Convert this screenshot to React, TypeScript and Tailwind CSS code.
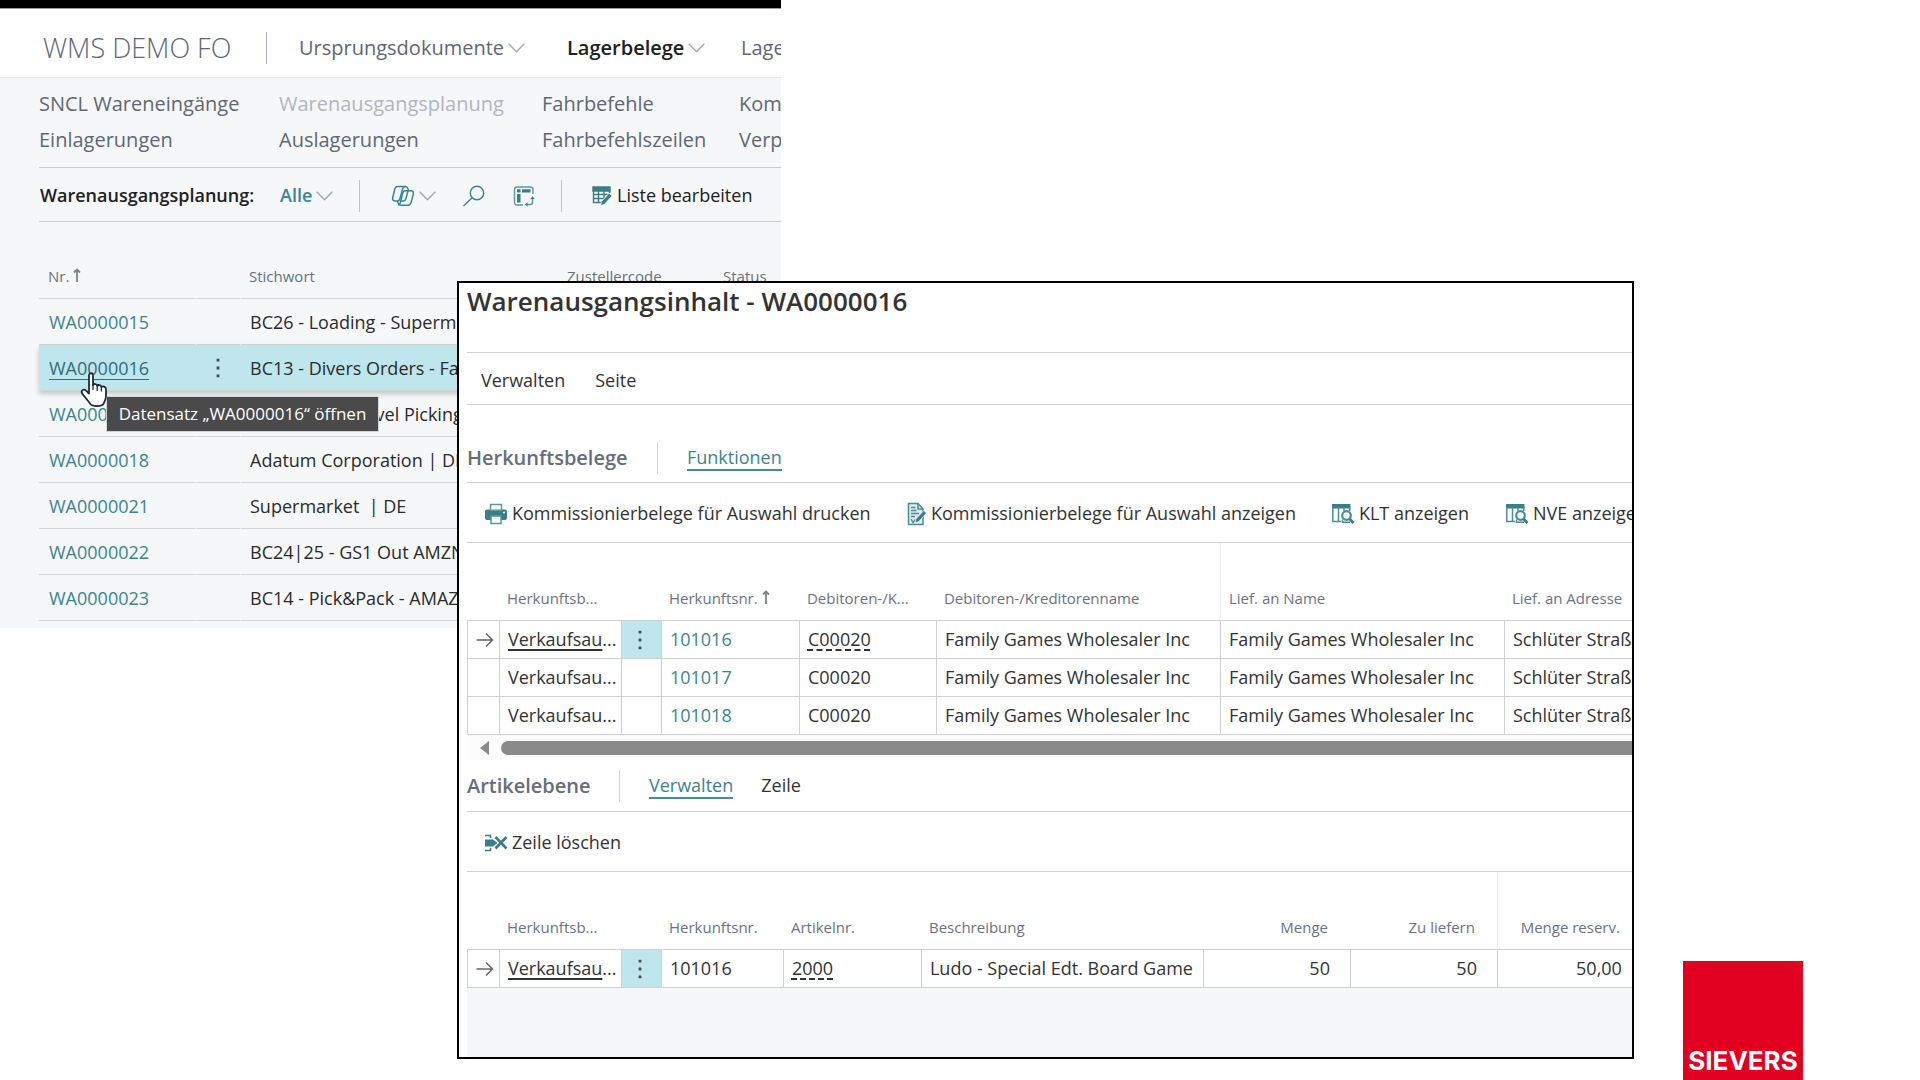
import type { ReactNode } from 'react';

const navLinks = [
  'SNCL Wareneingänge',
  'Warenausgangsplanung',
  'Fahrbefehle',
  'Kommissionierung',
  'Einlagerungen',
  'Auslagerungen',
  'Fahrbefehlszeilen',
  'Verpacken',
];

const plans = [
  { nr: 'WA0000015', keyword: 'BC26 - Loading - Supermarket' },
  { nr: 'WA0000016', keyword: 'BC13 - Divers Orders - Family Games' },
  { nr: 'WA0000017', keyword: 'BC12 - Multi Level Picking' },
  { nr: 'WA0000018', keyword: 'Adatum Corporation | DE' },
  { nr: 'WA0000021', keyword: 'Supermarket\u00a0 | DE' },
  { nr: 'WA0000022', keyword: 'BC24|25 - GS1 Out AMZN' },
  { nr: 'WA0000023', keyword: 'BC14 - Pick&Pack - AMAZON' },
];

const orders = ['101016', '101017', '101018'];

function Chevron() {
  return (
    <svg viewBox="0 0 17 10" className="h-2.5 w-[17px]" fill="none" stroke="#a3a7ae" strokeWidth="1.4" aria-hidden="true">
      <path d="M.7 .8l7.800 8 7.800-8" />
    </svg>
  );
}

function CopilotIcon() {
  return (
    <svg viewBox="0 0 24 22" className="h-[22px] w-6" fill="none" stroke="#3b8590" strokeWidth="1.5" strokeLinejoin="round" aria-hidden="true">
      <path d="M7 1.500h7.500c1.500 0 2 1 2.500 2.500l.6 1.800h2.200c2 0 3 1.500 2.500 3.300l-2 8c-.5 1.900-1.500 3.100-3.300 3.100H9.500c-1.500 0-2-1-2.500-2.500l-.5-1.700H4.200c-2 0-3-1.400-2.500-3.300l2-8.300C4.100 2.600 5.200 1.500 7 1.500z" />
      <path d="M14.500 1.500c-1.800 0-2.600 1-3 2.700L9 13.500c-.4 1.500-1.200 2.500-2.800 2.500" />
      <path d="M17.600 5.800h-3.400c-1.500 0-2.200 1-2.600 2.400l-2.300 9.500c-.4 1.500-1 2.300-2.300 2.300" />
      <path d="M9 16h3.500c1.300 0 2-.8 2.400-2.200l2.100-8" />
    </svg>
  );
}

function SearchIcon() {
  return (
    <svg viewBox="0 0 24 22" className="h-[22px] w-6" fill="none" stroke="#3b8590" strokeWidth="1.4" aria-hidden="true">
      <circle cx="15" cy="8" r="6.700" />
      <path d="M10.200 12.800L1.500 21" />
    </svg>
  );
}

function AnalyzeIcon() {
  return (
    <svg viewBox="0 0 22 22" className="h-[22px] w-[22px]" fill="none" stroke="#5b9aa3" strokeWidth="1.400" aria-hidden="true">
      <path d="M10 20H4a2.500 2.500 0 0 1-2.500-2.500v-13A2.500 2.500 0 0 1 4 2h13.500A2.500 2.500 0 0 1 20 4.500V9" />
      <path d="M4 4.200h3.500v3.300H4zM9 4.200h8.500v3.300H9zM4 9h3.500v8.500H4z" fill="#3b7e88" stroke="none" />
      <path d="M19.500 13v4.500a2 2 0 0 1-2 2H14" />
      <path d="M17.200 14l2.300-2.800 2.300 2.800zM14.500 17.200l-2.800 2.300 2.800 2.300z" fill="#3b7e88" stroke="none" />
    </svg>
  );
}

function EditListIcon() {
  return (
    <svg viewBox="0 0 21 20" className="h-5 w-[21px]" fill="none" stroke="#3b7e88" strokeWidth="1.400" aria-hidden="true">
      <path d="M1 1h17v4H1z" fill="#3b7e88" />
      <path d="M1.500 4v12.500H10M1.500 8.500H17M1.500 12.500H12M6.500 4v12.500M12 4v9M17.500 4v3" />
      <path d="M8.500 19.500l.9-4 7.800-8.300 2.900 2.800-7.800 8.500z" fill="#3b7e88" stroke="#f5f7f9" strokeWidth=".8" />
    </svg>
  );
}

function PrintIcon() {
  return (
    <svg viewBox="0 0 24 22" className="h-[22px] w-6" aria-hidden="true">
      <path d="M3 6.500h18a2 2 0 0 1 2 2V15a2 2 0 0 1-2 2H3a2 2 0 0 1-2-2V8.500a2 2 0 0 1 2-2z" fill="#3b7e88" />
      <path d="M6.500 1.500h11v5.800h-11zM7 13h10v7.500H7z" fill="#fff" stroke="#5b98a1" strokeWidth="1.500" />
      <circle cx="20" cy="9.500" r="1" fill="#fff" />
    </svg>
  );
}

function EditDocumentIcon() {
  return (
    <svg viewBox="0 0 20 24" className="h-6 w-5" fill="none" stroke="#4a8d97" strokeWidth="1.500" aria-hidden="true">
      <path d="M1.500 1.500H11L16 7v15.500H1.500z" fill="#dcebed" />
      <path d="M11 1.500V7h5" />
      <path d="M4 5.500h4.500M4 8.500h5.500M4 11.500h8M4 14.500h4M4 17l2 3.500 2.500-3" />
      <path d="M8 21l1-4.300 7.800-8.200 2.700 2.600-7.700 8.500z" fill="#3b7e88" stroke="#fff" strokeWidth=".7" />
    </svg>
  );
}

function TableSearchIcon() {
  return (
    <svg viewBox="0 0 24 21" className="h-[21px] w-6" fill="none" stroke="#4a8d97" strokeWidth="1.500" aria-hidden="true">
      <path d="M1 1h18.500v4.500H1z" fill="#3b7e88" stroke="none" />
      <path d="M1.800 4v14.500H10M7.500 4v14.500M13 4v4M18.800 4v4" />
      <circle cx="15.500" cy="12.500" r="4.300" strokeWidth="2.200" fill="#fff" />
      <path d="M11.500 16.500v2.800h7.500" />
      <path d="M18.500 15.800l4 4.200" stroke="#3b7e88" strokeWidth="2.800" />
    </svg>
  );
}

function DeleteLineIcon() {
  return (
    <svg viewBox="0 0 24 18" className="h-[18px] w-6" fill="none" stroke="#3b7e88" aria-hidden="true">
      <path d="M1 1.500h5.500V4M1 16.500h5.500V14" strokeWidth="1.600" />
      <path d="M1 5.500h8l4.500 3.500L9 12.500H1z" fill="#3b7e88" stroke="none" />
      <path d="M11.500 3L22.500 14.500M22.500 3L11.500 14.500" strokeWidth="2.600" />
    </svg>
  );
}

function SortArrow() {
  return (
    <svg viewBox="0 0 8 14" className="inline-block h-3.5 w-2 align-baseline" fill="none" stroke="#7d828c" strokeWidth="1.800" aria-hidden="true">
      <path d="M4 14V2M1 4.500L4 1.500l3 3" />
    </svg>
  );
}

function RowArrow() {
  return (
    <svg viewBox="0 0 18 16" className="mx-auto h-4 w-[18px]" fill="none" stroke="#666" strokeWidth="1.500" aria-hidden="true">
      <path d="M.5 8h16M10 1.500L16.500 8 10 14.500" />
    </svg>
  );
}

function Kebab() {
  return (
    <button type="button" aria-label="Weitere Optionen" className="flex w-full justify-center">
      <svg viewBox="0 0 4 20" className="h-5 w-1" fill="#4a4a4a" aria-hidden="true">
        <path d="M.6 .8h2.800v2.800H.6zM.6 8.600h2.800v2.800H.6zM.6 16.400h2.800v2.800H.6z" />
      </svg>
    </button>
  );
}

function HandCursor() {
  return (
    <svg viewBox="0 0 28 36" className="absolute left-[41px] top-[27px] z-20 h-9 w-7" fill="#fff" stroke="#222a3a" strokeWidth="1.800" strokeLinejoin="round" aria-hidden="true">
      <path d="M9 3.500C9 .5 13 .5 13 3.500V13c1-1.600 4-1.200 4.200.8 1.200-1.400 3.900-.8 4.200 1.200 1.400-1.200 4.600-.4 4.600 2.200V24c0 4-1.800 6-2.600 8-1.600 2.600-11 2.800-13 0C8.500 29 5 25.500 2.200 21.500c-1.800-3 1.400-5 3.800-2.800l3 2.800z" />
      <path d="M13 12v6M17.200 13.500V19M21.400 15v4.500" strokeWidth="1.300" />
    </svg>
  );
}

function ToolButton({ icon, children }: { icon: ReactNode; children: ReactNode }) {
  return (
    <button type="button" className="flex shrink-0 items-center gap-1 whitespace-nowrap">
      {icon}
      {children}
    </button>
  );
}

function Tab({ active, children }: { active?: boolean; children: ReactNode }) {
  return (
    <button
      type="button"
      className={active ? 'border-b-2 border-[#4a8d97] leading-6 text-[#3b8590]' : 'border-b-2 border-transparent leading-6'}
    >
      {children}
    </button>
  );
}

function PlanningPage() {
  return (
    <div className="w-[40.7%] overflow-hidden bg-[#f5f7f9] pb-[7px]">
      <div className="h-[9px] border-b border-gray-400 bg-black" />
      <header className="flex h-[69px] items-center border-b border-gray-200 bg-white pt-2.5 pl-[43px] text-[20px] whitespace-nowrap text-[#5f6775]">
        <h1 className="w-[223px] shrink-0 text-[27px] font-light">WMS DEMO FO</h1>
        <div className="h-8 w-px shrink-0 bg-[#a9abba]" />
        <button type="button" className="ml-8 flex w-[236px] shrink-0 items-center gap-1">
          Ursprungsdokumente <Chevron />
        </button>
        <button type="button" className="ml-8 flex w-[142px] shrink-0 items-center gap-1 font-semibold text-[#212121]">
          Lagerbelege <Chevron />
        </button>
        <button type="button" className="ml-8 shrink-0">Lagerplätze</button>
      </header>

      <div className="ml-[39px]">
        <nav className="grid grid-cols-[240px_263px_197px_auto] border-b border-[#c8cacd] pt-2 pb-[9px] text-[20px] leading-9 whitespace-nowrap text-[#5f6775]">
          {navLinks.map((link) => (
            <a key={link} href="#" className={link === 'Warenausgangsplanung' ? 'text-[#b1b5c0]' : ''}>
              {link}
            </a>
          ))}
        </nav>

        <div className="flex h-[54px] items-center border-b border-[#c8cacd] pt-0.5 pl-px text-[18px] whitespace-nowrap text-[#212121]">
          <h2 className="w-60 shrink-0 font-semibold">Warenausgangsplanung:</h2>
          <button type="button" className="flex w-[79px] shrink-0 items-center gap-1 font-semibold text-[#3b8590]">
            Alle <Chevron />
          </button>
          <div className="h-8 w-px shrink-0 bg-[#c0c2c6]" />
          <button type="button" aria-label="Copilot" className="ml-[31px] flex shrink-0 items-center gap-1">
            <CopilotIcon />
            <Chevron />
          </button>
          <button type="button" aria-label="Suchen" className="ml-[26px] shrink-0">
            <SearchIcon />
          </button>
          <button type="button" aria-label="Analysieren" className="ml-[27px] shrink-0">
            <AnalyzeIcon />
          </button>
          <div className="mr-[30px] ml-[26px] h-8 w-px shrink-0 bg-[#c0c2c6]" />
          <ToolButton icon={<EditListIcon />}>Liste bearbeiten</ToolButton>
        </div>

        <table className="w-full table-fixed border-separate border-spacing-0 text-[18px] text-[#2b2b2b]">
          <colgroup>
            <col className="w-[158px]" />
            <col className="w-11" />
            <col className="w-[318px]" />
            <col className="w-[156px]" />
            <col />
          </colgroup>
          <thead>
            <tr className="h-[77px] text-left align-bottom text-[15px] leading-5 whitespace-nowrap text-[#6b7080]">
              <th className="border-r-2 border-b border-r-transparent border-b-[#d3d5d8] pb-3 pl-[9px] font-normal">
                Nr. <SortArrow />
              </th>
              <th className="border-r-2 border-b border-r-transparent border-b-[#d3d5d8]" />
              <th className="border-b border-[#d3d5d8] pb-3 pl-2 font-normal">Stichwort</th>
              <th className="border-b border-[#d3d5d8] pb-3 pl-2 font-normal">Zustellercode</th>
              <th className="border-b border-[#d3d5d8] pb-3 pl-2 font-normal">Status</th>
            </tr>
          </thead>
          <tbody>
            {plans.map((plan) => {
              const selected = plan.nr === 'WA0000016';
              return (
                <tr
                  key={plan.nr}
                  className={selected ? 'relative h-[46px] bg-[#bfe6ec] shadow-[0_3px_5px_rgba(0,0,0,0.2)]' : 'h-[46px]'}
                >
                  <td className="relative border-r-2 border-b border-r-transparent border-b-[#d3d5d8] pt-0.5 pl-[10px]">
                    <a href="#" className={selected ? 'text-[#2f6f79] underline underline-offset-4' : 'text-[#3b8590]'}>
                      {plan.nr}
                    </a>
                    {selected && <HandCursor />}
                    {selected && (
                      <div
                        role="tooltip"
                        className="absolute top-[51px] left-[67px] z-10 w-[273px] border border-gray-300 bg-[#4a4a4a] text-center text-[17px] leading-[34px] font-medium whitespace-nowrap text-white"
                      >
                        Datensatz „WA0000016“ öffnen
                      </div>
                    )}
                  </td>
                  <td className="border-r-2 border-b border-r-transparent border-b-[#d3d5d8]">{selected && <Kebab />}</td>
                  <td className="overflow-hidden border-b border-[#d3d5d8] pt-0.5 pl-[9px] whitespace-nowrap">{plan.keyword}</td>
                  <td className="border-b border-[#d3d5d8]" />
                  <td className="border-b border-[#d3d5d8]" />
                </tr>
              );
            })}
          </tbody>
        </table>
      </div>
    </div>
  );
}

function OrdersTable() {
  return (
    <table className="w-full table-fixed border-separate border-spacing-0">
      <colgroup>
        <col className="w-8" />
        <col className="w-[122px]" />
        <col className="w-10" />
        <col className="w-[138px]" />
        <col className="w-[137px]" />
        <col className="w-[284px]" />
        <col className="w-[284px]" />
        <col />
      </colgroup>
      <thead>
        <tr className="h-[78px] text-left align-bottom text-[15px] leading-5 whitespace-nowrap text-[#6b7285] [&>th]:border-b [&>th]:border-b-[#cfd1d6] [&>th]:pb-3 [&>th]:pl-2 [&>th]:font-normal">
          <th />
          <th>Herkunftsb...</th>
          <th />
          <th>
            Herkunftsnr. <SortArrow />
          </th>
          <th>Debitoren-/K...</th>
          <th>Debitoren-/Kreditorenname</th>
          <th className="border-l border-l-[#eceef0]">Lief. an Name</th>
          <th>Lief. an Adresse</th>
        </tr>
      </thead>
      <tbody>
        {orders.map((order, i) => (
          <tr
            key={order}
            className="h-[38px] whitespace-nowrap [&>td]:overflow-hidden [&>td]:border-b [&>td]:border-l [&>td]:border-[#cfd1d6] [&>td]:pl-2"
          >
            <td className="pr-2.5">{i === 0 && <RowArrow />}</td>
            <td>
              <span className={i === 0 ? 'underline decoration-2 underline-offset-3' : ''}>Verkaufsau</span>...
            </td>
            <td className={i === 0 ? 'bg-[#bfe6ec] pr-2.5' : ''}>{i === 0 && <Kebab />}</td>
            <td>
              <a href="#" className="text-[#3b8590]">{order}</a>
            </td>
            <td>
              <span className={i === 0 ? 'underline decoration-dashed decoration-2 underline-offset-3' : ''}>C00020</span>
            </td>
            <td>Family Games Wholesaler Inc</td>
            <td>Family Games Wholesaler Inc</td>
            <td>Schlüter Straße 12</td>
          </tr>
        ))}
      </tbody>
    </table>
  );
}

function ItemsTable() {
  return (
    <table className="w-full table-fixed border-separate border-spacing-0">
      <colgroup>
        <col className="w-8" />
        <col className="w-[122px]" />
        <col className="w-10" />
        <col className="w-[122px]" />
        <col className="w-[138px]" />
        <col className="w-[282px]" />
        <col className="w-[147px]" />
        <col className="w-[147px]" />
        <col />
      </colgroup>
      <thead>
        <tr className="h-[78px] text-left align-bottom text-[15px] leading-5 whitespace-nowrap text-[#6b7285] [&>th]:border-b [&>th]:border-b-[#cfd1d6] [&>th]:pb-3 [&>th]:pl-2 [&>th]:font-normal">
          <th />
          <th>Herkunftsb...</th>
          <th />
          <th>Herkunftsnr.</th>
          <th>Artikelnr.</th>
          <th>Beschreibung</th>
          <th className="pr-[22px] text-right">Menge</th>
          <th className="pr-[22px] text-right">Zu liefern</th>
          <th className="border-l border-l-[#eceef0] pr-3 text-right">Menge reserv.</th>
        </tr>
      </thead>
      <tbody>
        <tr className="h-[38px] whitespace-nowrap [&>td]:border-b [&>td]:border-l [&>td]:border-[#cfd1d6] [&>td]:pl-2">
          <td className="pr-2.5">
            <RowArrow />
          </td>
          <td>
            <span className="underline decoration-2 underline-offset-3">Verkaufsau</span>...
          </td>
          <td className="bg-[#bfe6ec] pr-2.5">
            <Kebab />
          </td>
          <td>101016</td>
          <td>
            <span className="underline decoration-dashed decoration-2 underline-offset-3">2000</span>
          </td>
          <td>Ludo - Special Edt. Board Game</td>
          <td className="pr-5 text-right">50</td>
          <td className="pr-5 text-right">50</td>
          <td className="pr-[10px] text-right">50,00</td>
        </tr>
      </tbody>
    </table>
  );
}

function ContentWindow() {
  return (
    <main className="absolute top-[281px] left-[23.8%] w-[61.3%] overflow-hidden border-2 border-black bg-white pl-2 text-[18px] whitespace-nowrap text-[#333]">
      <h1 className="h-[70px] border-b border-[#cfd1d6] text-[26px] leading-9 font-semibold">
        Warenausgangsinhalt - WA0000016
      </h1>
      <div className="flex h-[52px] items-center gap-[30px] border-b border-[#cfd1d6] pt-1 pl-[14px]">
        <button type="button">Verwalten</button>
        <button type="button">Seite</button>
      </div>

      <div className="flex h-[78px] items-center border-b border-[#cfd1d6] pt-7">
        <h2 className="w-[190px] text-[20px] font-semibold text-[#666d80]">Herkunftsbelege</h2>
        <div className="mr-[29px] h-8 w-px bg-[#d3d5da]" />
        <Tab active>Funktionen</Tab>
      </div>
      <div className="flex h-[60px] items-center border-b border-[#cfd1d6] pt-0.5 pl-[17px]">
        <div className="w-[423px] shrink-0">
          <ToolButton icon={<PrintIcon />}>Kommissionierbelege für Auswahl drucken</ToolButton>
        </div>
        <div className="w-[424px] shrink-0">
          <ToolButton icon={<EditDocumentIcon />}>Kommissionierbelege für Auswahl anzeigen</ToolButton>
        </div>
        <div className="w-[174px] shrink-0">
          <ToolButton icon={<TableSearchIcon />}>KLT anzeigen</ToolButton>
        </div>
        <ToolButton icon={<TableSearchIcon />}>NVE anzeigen</ToolButton>
      </div>
      <OrdersTable />
      <div className="flex h-[25px] items-center gap-3 bg-[#fcfcfc] pl-[13px]">
        <button type="button" aria-label="Nach links blättern">
          <svg viewBox="0 0 9 14" className="h-3.5 w-[9px]" fill="#8a8a8a" aria-hidden="true">
            <path d="M9 0v14L0 7z" />
          </svg>
        </button>
        <div className="h-3.5 flex-1 rounded-l-full bg-[#8a8a8a]" />
      </div>

      <div className="flex h-[52px] items-center border-b border-[#cfd1d6]">
        <h2 className="w-[152px] text-[20px] font-semibold text-[#666d80]">Artikelebene</h2>
        <div className="mr-[29px] h-8 w-px bg-[#d3d5da]" />
        <div className="flex gap-7">
          <Tab active>Verwalten</Tab>
          <Tab>Zeile</Tab>
        </div>
      </div>
      <div className="flex h-[60px] items-center border-b border-[#cfd1d6] pt-0.5 pl-[17px]">
        <ToolButton icon={<DeleteLineIcon />}>Zeile löschen</ToolButton>
      </div>
      <ItemsTable />
      <div className="h-[69px] bg-[#f5f6f8]" />
    </main>
  );
}

export default function App() {
  return (
    <div className="relative min-h-screen overflow-hidden bg-white font-['Open_Sans','Noto_Sans',sans-serif]">
      <PlanningPage />
      <ContentWindow />
      <div className="absolute right-[117px] bottom-0 flex h-[119px] w-[120px] items-end justify-center bg-[#e20020] pb-[3px] font-['Inter',sans-serif] text-[26px] leading-8 font-bold text-white">
        SIEVERS
      </div>
    </div>
  );
}
